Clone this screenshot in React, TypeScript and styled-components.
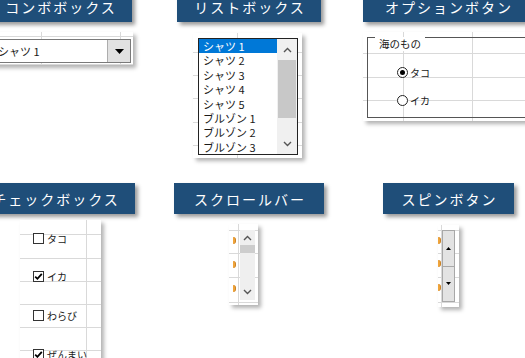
import React from "react";
import styled, { createGlobalStyle } from "styled-components";

const GlobalStyle = createGlobalStyle`
  html, body { margin: 0; padding: 0; background: #fff; }
  body { font-family: "Noto Sans CJK JP", "Noto Sans", sans-serif; }
`;

const GRID = "#d9d9d9";
const vLine = (x: number) =>
  `linear-gradient(to right, transparent ${x}px, ${GRID} ${x}px, ${GRID} ${x + 1}px, transparent ${x + 1}px)`;
const hLine = (y: number) =>
  `linear-gradient(to bottom, transparent ${y}px, ${GRID} ${y}px, ${GRID} ${y + 1}px, transparent ${y + 1}px)`;
const lines = (vs: number[], hs: number[]) => [...vs.map(vLine), ...hs.map(hLine)].join(", ");

const Canvas = styled.div`
  width: 525px;
  height: 358px;
  overflow: hidden;
  background: #fff;
`;

const Board = styled.div`
  display: grid;
  grid-template-columns: repeat(3, 175px);
  grid-template-rows: 192px 175px;
  margin-top: -9px;
`;

const Cell = styled.div`
  display: flex;
  flex-direction: column;
  align-items: flex-start;
  min-width: 0;
`;

const TitleBar = styled.div<{ $x: number; $w: number }>`
  flex: none;
  margin-left: ${(p) => p.$x}px;
  width: ${(p) => p.$w}px;
  height: 31px;
  box-sizing: border-box;
  padding-left: 2px;
  background: #1f4e79;
  color: #fff;
  font-family: "Noto Sans CJK JP", sans-serif;
  font-size: 14px;
  letter-spacing: 2px;
  white-space: nowrap;
  display: flex;
  align-items: center;
  justify-content: center;
  box-shadow: 3px 3px 4px rgba(0, 0, 0, 0.4);
`;

const Panel = styled.div<{ $x: number; $y: number; $w: number; $h: number; $lines: string }>`
  flex: none;
  box-sizing: border-box;
  margin-left: ${(p) => p.$x}px;
  margin-top: ${(p) => p.$y}px;
  width: ${(p) => p.$w}px;
  height: ${(p) => p.$h}px;
  background-color: #fff;
  background-image: ${(p) => p.$lines};
  box-shadow: 3px 3px 4px rgba(0, 0, 0, 0.3);
  font-family: "Noto Sans CJK JP", sans-serif;
  color: #1a1a1a;
`;

/* ---------- combo box ---------- */
const Combo = styled.div`
  margin: 7px 0 0 8px;
  width: 137px;
  height: 24px;
  box-sizing: border-box;
  border: 1px solid #7a7a7a;
  background: #fff;
  display: flex;
`;
const ComboText = styled.div`
  flex: 1;
  display: flex;
  align-items: center;
  padding-left: 3px;
  font-size: 11px;
`;
const ComboButton = styled.div`
  width: 22px;
  background: #e1e1e1;
  border-left: 1px solid #adadad;
  display: flex;
  align-items: center;
  justify-content: center;
`;

/* ---------- list box ---------- */
const ListBox = styled.div`
  margin: 5px 0 0 5px;
  width: 100px;
  height: 117px;
  box-sizing: border-box;
  border: 1px solid #222;
  background: #fff;
  display: flex;
`;
const ListItems = styled.div`
  flex: 1;
  display: flex;
  flex-direction: column;
`;
const ListItem = styled.div<{ $selected?: boolean }>`
  height: 14.4px;
  line-height: 14.4px;
  padding-left: 4px;
  font-size: 11px;
  white-space: nowrap;
  background: ${(p) => (p.$selected ? "#0078d7" : "transparent")};
  color: ${(p) => (p.$selected ? "#fff" : "#1a1a1a")};
`;
const ListScroll = styled.div`
  width: 20px;
  background: #f0f0f0;
  display: flex;
  flex-direction: column;
  align-items: center;
`;
const ScrollArrow = styled.div<{ $h: number }>`
  height: ${(p) => p.$h}px;
  width: 100%;
  display: flex;
  align-items: center;
  justify-content: center;
  flex: none;
`;
const ListThumb = styled.div`
  width: 18px;
  height: 58px;
  background: #c8c8c8;
  flex: none;
`;
const Spacer = styled.div`
  flex: 1;
`;

/* ---------- option buttons ---------- */
const GroupFrame = styled.div`
  margin: 5px 0 0 4px;
  width: 175px;
  height: 81px;
  box-sizing: border-box;
  border: 1px solid #555;
  border-right: none;
  display: flex;
  flex-direction: column;
  align-items: flex-start;
`;
const Legend = styled.div`
  margin: -1px 0 0 7px;
  padding: 0 4px;
  height: 14px;
  line-height: 14px;
  background: #fff;
  font-size: 10.5px;
`;
const OptionRow = styled.div<{ $top: number }>`
  margin: ${(p) => p.$top}px 0 0 29px;
  height: 14px;
  display: flex;
  align-items: center;
  gap: 2px;
  font-size: 10px;
`;
const Radio = styled.div<{ $on?: boolean }>`
  width: 11px;
  height: 11px;
  box-sizing: border-box;
  border: 1px solid #222;
  border-radius: 50%;
  background: #fff;
  display: flex;
  align-items: center;
  justify-content: center;
  &::after {
    content: "";
    width: 5px;
    height: 5px;
    border-radius: 50%;
    background: ${(p) => (p.$on ? "#000" : "transparent")};
  }
`;

/* ---------- check boxes ---------- */
const CheckList = styled.div`
  padding: 12px 0 0 13px;
  display: flex;
  flex-direction: column;
  gap: 26.7px;
`;
const CheckRow = styled.div`
  height: 12px;
  display: flex;
  align-items: center;
  gap: 3px;
  font-size: 10px;
  white-space: nowrap;
`;
const CheckBox = styled.div`
  width: 11px;
  height: 11px;
  box-sizing: border-box;
  border: 1px solid #333;
  background: #fff;
  display: flex;
  align-items: center;
  justify-content: center;
  flex: none;
`;

/* ---------- scroll bar / spin button ---------- */
const ControlRow = styled.div<{ $pad: number; $gap: number }>`
  display: flex;
  padding-left: ${(p) => p.$pad}px;
  gap: ${(p) => p.$gap}px;
`;
const Marks = styled.div<{ $top: number; $gap: number }>`
  display: flex;
  flex-direction: column;
  padding-top: ${(p) => p.$top}px;
  gap: ${(p) => p.$gap}px;
`;
const Mark = styled.div`
  width: 3px;
  height: 7px;
  box-sizing: border-box;
  border-radius: 0 4px 4px 0;
  background: #f0a43a;
  border-right: 1px solid #c98228;
`;
const VScroll = styled.div`
  margin-top: 6px;
  width: 15px;
  height: 70px;
  background: #efefef;
  display: flex;
  flex-direction: column;
`;
const VThumb = styled.div`
  height: 8px;
  background: #cdcdcd;
  flex: none;
`;
const Spin = styled.div`
  margin-top: 5px;
  width: 13px;
  height: 72px;
  display: flex;
  flex-direction: column;
`;
const SpinButton = styled.div`
  flex: 1;
  box-sizing: border-box;
  border: 1px solid #a8a8a8;
  background: #e3e3e3;
  display: flex;
  align-items: center;
  justify-content: center;
  & + & {
    border-top: none;
  }
`;

const ChevronUp = () => (
  <svg width="9" height="6" viewBox="0 0 9 6">
    <polyline points="1,5 4.5,1.5 8,5" fill="none" stroke="#555" strokeWidth="1.4" />
  </svg>
);
const ChevronDown = () => (
  <svg width="9" height="6" viewBox="0 0 9 6">
    <polyline points="1,1 4.5,4.5 8,1" fill="none" stroke="#555" strokeWidth="1.4" />
  </svg>
);
const Tri = ({ up, w, h }: { up?: boolean; w: number; h: number }) => (
  <svg width={w} height={h} viewBox={`0 0 ${w} ${h}`}>
    <polygon points={up ? `0,${h} ${w / 2},0 ${w},${h}` : `0,0 ${w},0 ${w / 2},${h}`} fill="#000" />
  </svg>
);
const Check = () => (
  <svg width="9" height="9" viewBox="0 0 9 9">
    <polyline points="1.2,4.6 3.4,6.8 7.8,1.8" fill="none" stroke="#000" strokeWidth="1.8" />
  </svg>
);

const listItems = ["シャツ 1", "シャツ 2", "シャツ 3", "シャツ 4", "シャツ 5", "ブルゾン 1", "ブルゾン 2", "ブルゾン 3"];
const checks = [
  { label: "タコ", on: false },
  { label: "イカ", on: true },
  { label: "わらび", on: false },
  { label: "ぜんまい", on: true },
];

export default function App() {
  return (
    <>
      <GlobalStyle />
      <Canvas>
        <Board>
          <Cell>
            <TitleBar $x={-12} $w={144}>コンボボックス</TitleBar>
            <Panel $x={-14} $y={10} $w={147} $h={33} $lines={lines([55, 134], [4, 32])}>
              <Combo>
                <ComboText>シャツ 1</ComboText>
                <ComboButton>
                  <Tri w={9} h={5} />
                </ComboButton>
              </Combo>
            </Panel>
          </Cell>

          <Cell>
            <TitleBar $x={2} $w={144}>リストボックス</TitleBar>
            <Panel $x={18} $y={11} $w={109} $h={125} $lines={lines([44], [19, 42, 65, 89, 112])}>
              <ListBox>
                <ListItems>
                  {listItems.map((t, i) => (
                    <ListItem key={t} $selected={i === 0}>
                      {t}
                    </ListItem>
                  ))}
                </ListItems>
                <ListScroll>
                  <ScrollArrow $h={21}>
                    <ChevronUp />
                  </ScrollArrow>
                  <ListThumb />
                  <Spacer />
                  <ScrollArrow $h={21}>
                    <ChevronDown />
                  </ScrollArrow>
                </ListScroll>
              </ListBox>
            </Panel>
          </Cell>

          <Cell>
            <TitleBar $x={13} $w={170}>オプションボタン</TitleBar>
            <Panel $x={13} $y={10} $w={180} $h={89} $lines={lines([40, 109], [21, 45, 68])}>
              <GroupFrame>
                <Legend>海のもの</Legend>
                <OptionRow $top={14}>
                  <Radio $on />
                  タコ
                </OptionRow>
                <OptionRow $top={14}>
                  <Radio />
                  イカ
                </OptionRow>
              </GroupFrame>
            </Panel>
          </Cell>

          <Cell>
            <TitleBar $x={-25} $w={160}>チェックボックス</TitleBar>
            <Panel $x={20} $y={6} $w={81} $h={150} $lines={lines([66], [14, 38, 61, 84, 107, 130])}>
              <CheckList>
                {checks.map((c) => (
                  <CheckRow key={c.label}>
                    <CheckBox>{c.on && <Check />}</CheckBox>
                    {c.label}
                  </CheckRow>
                ))}
              </CheckList>
            </Panel>
          </Cell>

          <Cell>
            <TitleBar $x={-1} $w={150}>スクロールバー</TitleBar>
            <Panel $x={54} $y={10} $w={29} $h={81} $lines={lines([9], [6, 29, 53, 78])}>
              <ControlRow $pad={4} $gap={4}>
                <Marks $top={12.5} $gap={17}>
                  <Mark />
                  <Mark />
                  <Mark />
                </Marks>
                <VScroll>
                  <ScrollArrow $h={15}>
                    <ChevronUp />
                  </ScrollArrow>
                  <VThumb />
                  <Spacer />
                  <ScrollArrow $h={17}>
                    <ChevronDown />
                  </ScrollArrow>
                </VScroll>
              </ControlRow>
            </Panel>
          </Cell>

          <Cell>
            <TitleBar $x={33} $w={131}>スピンボタン</TitleBar>
            <Panel $x={88} $y={11} $w={21} $h={82} $lines={lines([3], [5, 28, 52, 77])}>
              <ControlRow $pad={0} $gap={1}>
                <Marks $top={11.5} $gap={16.5}>
                  <Mark />
                  <Mark />
                  <Mark />
                </Marks>
                <Spin>
                  <SpinButton>
                    <Tri up w={5} h={3} />
                  </SpinButton>
                  <SpinButton>
                    <Tri w={5} h={3} />
                  </SpinButton>
                </Spin>
              </ControlRow>
            </Panel>
          </Cell>
        </Board>
      </Canvas>
    </>
  );
}
